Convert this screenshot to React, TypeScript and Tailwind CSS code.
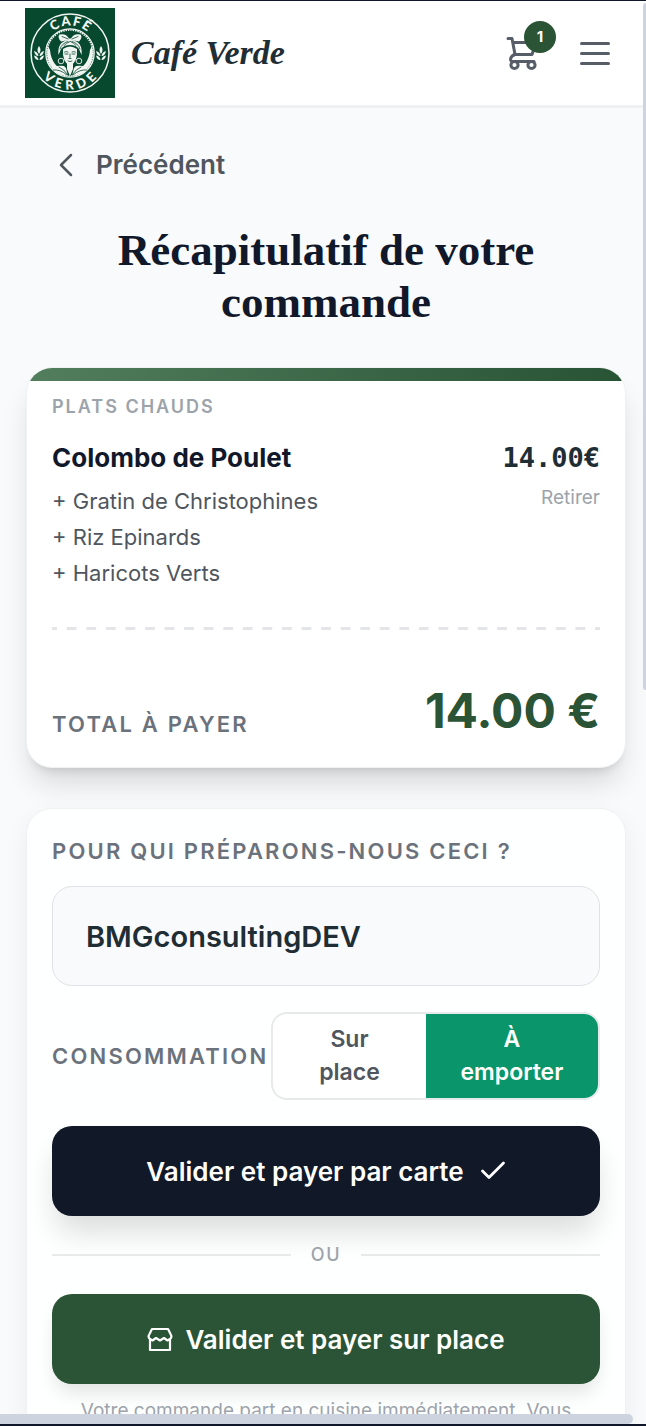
import { useState } from "react";

const extras = ["Gratin de Christophines", "Riz Epinards", "Haricots Verts"];

function Logo() {
  return (
    <svg viewBox="0 0 90 90" className="size-[90px] shrink-0" role="img" aria-label="Logo Café Verde">
      <rect width="90" height="90" fill="#07492f" />
      <g fill="none" stroke="#f2f6f3">
        <circle cx="45" cy="45" r="39" strokeWidth="1.5" />
        <circle cx="45" cy="45" r="24.2" strokeWidth="1.3" />
        <circle cx="45" cy="45" r="23" strokeWidth="1.6" strokeDasharray="1.4 1" />
      </g>
      <path
        d="M23 38C20 50 25 61 35 66L38 62C31 59 26 53 25 42ZM67 38C70 50 65 61 55 66L52 62C59 59 64 53 65 42Z"
        fill="#f2f6f3"
      />
      <defs>
        <path id="logo-top" d="M17.500 45A27.500 27.500 0 0 1 72.500 45" />
        <path id="logo-bottom" d="M8.500 45A36.500 36.500 0 0 0 81.500 45" />
      </defs>
      <g fill="#f7faf8" fontFamily="Lato, sans-serif" fontWeight="900" fontSize="13" textAnchor="middle">
        <text letterSpacing="1.5"><textPath href="#logo-top" startOffset="51%">CAFÉ</textPath></text>
        <text letterSpacing="4.5"><textPath href="#logo-bottom" startOffset="52%">VERDE</textPath></text>
      </g>
      <g fill="#f2f6f3">
        <path d="M39 58Q29 57 27 61Q33 68 43 68L41 60ZM51 58Q61 57 63 61Q57 68 47 68L49 60Z" />
        <path d="M42 55H48V61L45 68L42 61Z" />
        <path d="M38 41Q37 54 45 58Q53 54 52 41Q45 36 38 41Z" />
        <path d="M33.500 47Q32 34 43 32L36 33.500Q32 29 34.500 26.500Q41 25 44 30.500H46Q49 25 55.500 26.500Q58 29 54 33.500L47 32Q58 34 56.500 47L54 41Q51 37 45 37Q39 37 36 41Z" />
      </g>
      <g fill="none" stroke="#07492f" strokeWidth="0.800" strokeLinecap="round">
        <path d="M39.500 44Q41 43 43 44M47 44Q49 43 50.500 44M40 46H43M47 46H50M45 46V49.500M44 50.500H46M43 53Q45 54.500 47 53" />
        <path d="M35 41Q37 35 43 33.500M39 37.500Q41 35 45 33.500M51 37.500Q49 35 45.500 33.500M55 41Q53 35 47 33.500M37 28.500L43 31M53 28.500L47 31" />
        <path d="M28 62Q35 61 42 67M34 59Q39 61 43 67M62 62Q55 61 48 67M56 59Q51 61 47 67" />
      </g>
      <g fill="none" stroke="#f2f6f3" strokeWidth="0.900">
        <circle cx="36" cy="53" r="2.800" />
        <circle cx="54" cy="53" r="2.800" />
      </g>
      {["", "translate(62 0)"].map((t) => (
        <g key={t} transform={t} fill="#f2f6f3">
          <path d="M14 38Q11 42 14 46Q17 42 14 38Z" />
          <path d="M9 43Q10 48 13.500 48Q13 44 9 43ZM19 43Q18 48 14.500 48Q15 44 19 43Z" />
          <path d="M9 47.500Q10 52 13.500 52Q13 48 9 47.500ZM19 47.500Q18 52 14.500 52Q15 48 19 47.500Z" />
        </g>
      ))}
    </svg>
  );
}

function CartIcon() {
  return (
    <svg viewBox="0 0 34 36" className="h-9 w-[34px]" fill="none" stroke="#565d67" strokeWidth="3" strokeLinecap="round" strokeLinejoin="round">
      <path d="M2 3.500H6L9 19.500H26L30 7.500H7" />
      <path d="M9 19.500C4 21 3 26.500 7 26.500H28" />
      <circle cx="8.500" cy="30" r="3.600" />
      <circle cx="25.500" cy="30" r="3.600" />
    </svg>
  );
}

function StoreIcon() {
  return (
    <svg viewBox="0 0 26 26" className="size-[26px]" fill="none" stroke="currentColor" strokeWidth="2.200" strokeLinejoin="round" strokeLinecap="round">
      <path d="M3 13V24H23V13" />
      <path d="M3 13C1 11.500 1.500 9.500 2.500 8L5 3H21L23.500 8C24.500 9.500 25 11.500 23 13L20.500 14.500L17 12L13 14.500L9 12L5.500 14.500Z" />
    </svg>
  );
}

export default function App() {
  const [name, setName] = useState("BMGconsultingDEV");
  const [mode, setMode] = useState("emporter");
  const base = "text-[23px] leading-[33px] font-semibold";

  return (
    <div className="relative flex h-screen flex-col overflow-hidden border-t border-b-2 border-[#10172a] bg-[#f9fafc] font-['Inter',sans-serif]">
      <header className="flex shrink-0 items-center border-b-3 border-[#f0f1f3] bg-white py-[7px] pr-9 pl-[25px]">
        <Logo />
        <a href="#" className="ml-4 font-['Liberation_Serif',serif] text-[34px] leading-10 font-bold text-[#1f2d34] italic">
          Café Verde
        </a>
        <button aria-label="Panier" className="relative ml-auto">
          <CartIcon />
          <span className="absolute -top-[14px] left-[18px] flex size-8 items-center justify-center rounded-full bg-[#2a5435] text-[15px] font-bold text-white">
            1
          </span>
        </button>
        <button aria-label="Menu" className="ml-10 flex w-[30px] flex-col gap-[7px]">
          <span className="h-[3px] rounded-full bg-[#565d67]" />
          <span className="h-[3px] rounded-full bg-[#565d67]" />
          <span className="h-[3px] rounded-full bg-[#565d67]" />
        </button>
      </header>

      <main className="min-h-0 flex-1 overflow-hidden pt-[41px] pr-5 pl-[26px]">
        <a href="#" className="ml-8 flex w-fit items-center gap-[22px] text-[26px] leading-8 font-semibold text-[#4f565e]">
          <svg viewBox="0 0 16 24" className="h-6 w-4" fill="none" stroke="currentColor" strokeWidth="2.500" strokeLinecap="round" strokeLinejoin="round">
            <path d="M13 2L3 12L13 22" />
          </svg>
          Précédent
        </a>

        <h1 className="mx-auto mt-[43px] max-w-[480px] text-center font-['Liberation_Serif',serif] text-[45px] leading-[52px] font-bold text-[#10182a]">
          Récapitulatif de votre commande
        </h1>

        <section className="mt-[39px] overflow-hidden rounded-[26px] border border-[#f0f1f3] bg-white shadow-[0_20px_30px_-6px_rgba(0,0,0,0.14),0_8px_10px_-6px_rgba(0,0,0,0.12)]">
          <div className="h-[13px] bg-linear-to-r from-[#527e5e] to-[#285334]" />
          <div className="px-[25px] pt-3 pb-[27px]">
            <h2 className="text-[18px] leading-7 font-semibold tracking-[2px] text-[#9ca3ab] uppercase">Plats chauds</h2>
            <div className="mt-[19px] flex justify-between">
              <div>
                <h3 className="text-[26px] leading-9 font-bold text-[#10182a]">Colombo de Poulet</h3>
                <ul className="mt-[7px] text-[22px] leading-9 text-[#4f565e]">
                  {extras.map((e) => (
                    <li key={e}>+ {e}</li>
                  ))}
                </ul>
              </div>
              <div className="flex flex-col items-end">
                <span className="font-['DejaVu_Sans_Mono',monospace] text-[27px] leading-9 font-bold text-[#1f2d34]">14.00€</span>
                <button className="mt-[6px] text-[19px] leading-8 text-[#9ca3ab]">Retirer</button>
              </div>
            </div>
            <div className="mt-9 h-[3px] bg-[linear-gradient(to_right,transparent_25%,#e3e5e8_25%,#e3e5e8_75%,transparent_75%)] bg-[length:calc(100%/28)_3px] bg-center bg-repeat-x" />
            <div className="mt-[52px] flex items-end justify-between">
              <span className="text-[22px] leading-8 font-semibold tracking-widest text-[#6b727c]">TOTAL À PAYER</span>
              <span className="text-[48px] leading-[58px] font-bold text-[#2a5435]">14.00 €</span>
            </div>
          </div>
        </section>

        <section className="mt-10 rounded-[26px] border border-[#f0f1f3] bg-white/90 px-[25px] py-[26px] shadow-[0_8px_24px_rgba(0,0,0,0.06)]">
          <label htmlFor="customer" className="block text-[22px] leading-8 font-semibold tracking-widest text-[#6b727c]">
            POUR QUI PRÉPARONS-NOUS CECI ?
          </label>
          <input
            id="customer"
            value={name}
            onChange={(e) => setName(e.target.value)}
            className="mt-[19px] block h-[100px] w-full rounded-[20px] border border-[#dfe2e6] bg-[#f9fafc] px-[33px] text-[29px] font-semibold text-[#1f2d34] outline-none"
          />
          <div className="mt-[26px] flex items-center">
            <span className="w-2/5 text-[22px] leading-8 font-semibold tracking-widest text-[#6b727c]">CONSOMMATION</span>
            <div className="flex h-[88px] w-3/5 shrink-0 overflow-hidden rounded-2xl border-2 border-[#e8e9eb] bg-white">
              <button
                onClick={() => setMode("place")}
                className={`${base} w-[47%] px-10 ${mode === "place" ? "bg-[#0a956a] text-white" : "text-[#4f565e]"}`}
              >
                Sur place
              </button>
              <button
                onClick={() => setMode("emporter")}
                className={`${base} w-[53%] px-8 ${mode === "emporter" ? "bg-[#0a956a] text-white" : "text-[#4f565e]"}`}
              >
                À<br />emporter
              </button>
            </div>
          </div>
          <button className="mt-[26px] flex h-[90px] w-full items-center justify-center gap-4 rounded-[20px] bg-[#111827] text-[26px] font-semibold text-white shadow-[0_20px_30px_-4px_rgba(0,0,0,0.14)]">
            Valider et payer par carte
            <svg viewBox="0 0 26 26" className="size-[26px]" fill="none" stroke="currentColor" strokeWidth="2.800" strokeLinecap="round" strokeLinejoin="round">
              <path d="M2.500 13L9 19.500L23.500 5" />
            </svg>
          </button>
          <div className="my-6 flex items-center gap-5 text-[18px] leading-[30px] font-medium tracking-widest text-[#9ca3ab]">
            <span className="h-[2px] flex-1 bg-[#e8e9eb]" />
            OU
            <span className="h-[2px] flex-1 bg-[#e8e9eb]" />
          </div>
          <button className="flex h-[90px] w-full items-center justify-center gap-3 rounded-[20px] bg-[#2a5435] text-[26px] font-semibold text-white shadow-[0_12px_20px_-4px_rgba(0,0,0,0.12)]">
            <StoreIcon />
            Valider et payer sur place
          </button>
          <p className="mt-3 text-center text-[19px] leading-[30px] text-[#9ca3ab]">
            Votre commande part en cuisine immédiatement. Vous
          </p>
        </section>
      </main>

      <div className="absolute top-[2px] right-0 h-[48.300%] w-[3px] rounded-l-full bg-[#cdd4df]" />
      <div className="absolute bottom-0 left-0 h-[10px] w-[98%] rounded-r-full bg-[#cdd4df]" />
    </div>
  );
}
